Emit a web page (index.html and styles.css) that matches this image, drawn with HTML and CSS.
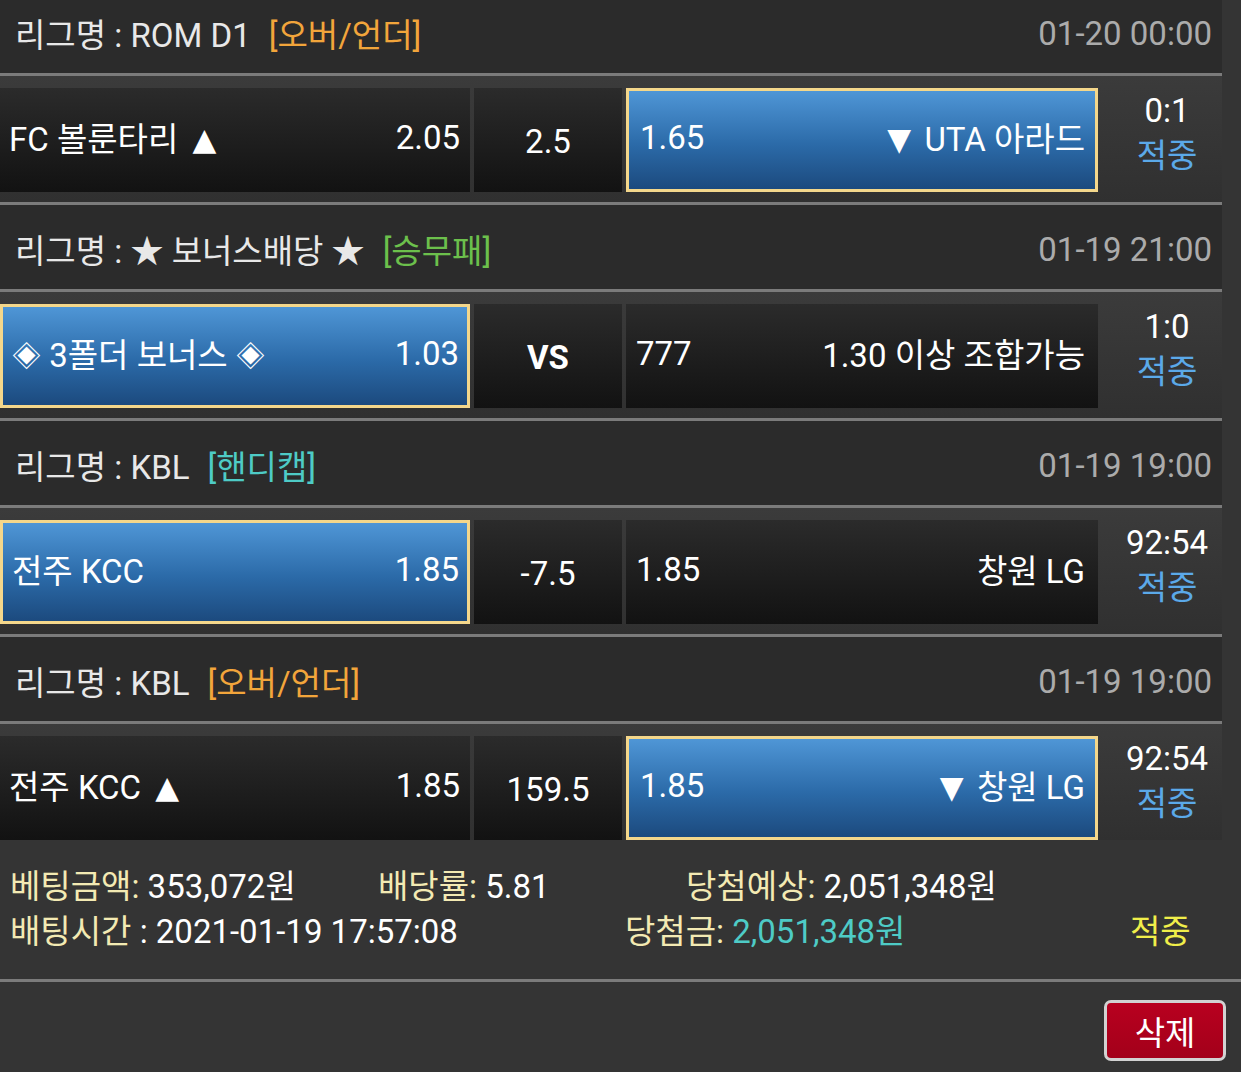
FILE: index.html
```html
<!DOCTYPE html>
<html lang="ko">
<head>
<meta charset="utf-8">
<title>베팅내역</title>
<link rel="stylesheet" href="styles.css">
</head>
<body>
<div class="page">
  <div class="list">
    <section class="game">
      <div class="league"><span class="lname">리그명 : ROM D1</span><span class="tag orange">[오버/언더]</span><span class="time">01-20 00:00</span></div>
      <div class="match">
        <div class="cell home"><span>FC 볼룬타리 <span class="tri up">▲</span></span><span>2.05</span></div>
        <div class="cell mid">2.5</div>
        <div class="cell away sel"><span>1.65</span><span><span class="tri down">▼</span> UTA 아라드</span></div>
        <div class="score"><span class="res">0:1</span><span class="hit">적중</span></div>
      </div>
    </section>
    <section class="game">
      <div class="league"><span class="lname">리그명 : ★ 보너스배당 ★</span><span class="tag green">[승무패]</span><span class="time">01-19 21:00</span></div>
      <div class="match">
        <div class="cell home sel"><span><span class="dia">◈</span> 3폴더 보너스 <span class="dia">◈</span></span><span>1.03</span></div>
        <div class="cell mid vs">VS</div>
        <div class="cell away"><span>777</span><span>1.30 이상 조합가능</span></div>
        <div class="score"><span class="res">1:0</span><span class="hit">적중</span></div>
      </div>
    </section>
    <section class="game">
      <div class="league"><span class="lname">리그명 : KBL</span><span class="tag teal">[핸디캡]</span><span class="time">01-19 19:00</span></div>
      <div class="match">
        <div class="cell home sel"><span>전주 KCC</span><span>1.85</span></div>
        <div class="cell mid">-7.5</div>
        <div class="cell away"><span>1.85</span><span>창원 LG</span></div>
        <div class="score"><span class="res">92:54</span><span class="hit">적중</span></div>
      </div>
    </section>
    <section class="game">
      <div class="league"><span class="lname">리그명 : KBL</span><span class="tag orange">[오버/언더]</span><span class="time">01-19 19:00</span></div>
      <div class="match">
        <div class="cell home"><span>전주 KCC <span class="tri up">▲</span></span><span>1.85</span></div>
        <div class="cell mid">159.5</div>
        <div class="cell away sel"><span>1.85</span><span><span class="tri down">▼</span> 창원 LG</span></div>
        <div class="score"><span class="res">92:54</span><span class="hit">적중</span></div>
      </div>
    </section>
  </div>
  <div class="summary">
    <div class="srow">
      <span class="c1"><span class="lbl">베팅금액:</span> 353,072원</span>
      <span class="c2"><span class="lbl">배당률:</span> 5.81</span>
      <span><span class="lbl">당첨예상:</span> 2,051,348원</span>
    </div>
    <div class="srow">
      <span class="c1b"><span class="lbl">배팅시간</span> : 2021-01-19 17:57:08</span>
      <span class="c2b"><span class="lbl">당첨금:</span> <span class="win">2,051,348원</span></span>
      <span class="result">적중</span>
    </div>
  </div>
  <div class="actions">
    <button class="del" type="button">삭제</button>
  </div>
</div>
</body>
</html>
```

FILE: styles.css
```css
* { box-sizing: border-box; }

html, body {
  margin: 0;
  padding: 0;
  background: #343434;
}

body {
  font-family: Roboto, "Noto Sans CJK KR", sans-serif;
  font-size: 33px;
  color: #ffffff;
  overflow: hidden;
}

.page {
  width: 1241px;
  height: 1072px;
  overflow: hidden;
}

.list {
  width: 1222px;
  margin-top: -11px;
}

.game:not(:last-child) {
  border-bottom: 3px solid #7b7b7b;
}

.league {
  height: 87px;
  display: flex;
  align-items: center;
  padding: 4px 10px 0 15px;
  background: #2b2b2b;
  border-bottom: 3px solid #7b7b7b;
  color: #e8e8e8;
}

.tag { margin-left: 18px; }
.orange { color: #f2a53b; }
.green { color: #6cc04c; }
.teal { color: #4ecbc6; }

.time {
  margin-left: auto;
  color: #ababab;
}

.match {
  display: flex;
  gap: 4px;
  padding: 12px 0 10px;
  background: linear-gradient(#3b3b3b, #303030);
}

.game:last-child .match { padding-bottom: 0; }

.cell {
  height: 104px;
  display: flex;
  align-items: center;
  justify-content: space-between;
  padding: 0 10px 6px 9px;
  background: linear-gradient(#2b2b2b, #121212);
  color: #fff;
}

.cell.sel {
  border: 3px solid #f4d78b;
  padding: 0 8px 6px 9px;
  background: linear-gradient(#4f96d6, #2b6aa8 55%, #1c4a7e);
}

.tri {
  font-family: "DejaVu Sans", sans-serif;
  font-size: 31px;
  vertical-align: 1px;
}
.tri.up { margin-left: 6px; }
.tri.down { margin-right: 5px; }

.dia {
  font-size: 29px;
  vertical-align: 1px;
}

.home { width: 470px; }
.mid {
  width: 148px;
  justify-content: center;
  padding: 2px 0 0;
}
.away { width: 472px; padding: 0 13px 6px 10px; }
.away.sel { padding: 0 10px 6px 11px; }

.vs { font-weight: 700; }

.score {
  flex: 1;
  height: 104px;
  display: flex;
  flex-direction: column;
  align-items: center;
  justify-content: center;
  padding: 0 0 14px 10px;
  line-height: 45px;
}

.res { color: #fff; }
.hit { color: #5ba9e9; }

.summary {
  height: 142px;
  padding: 24px 0 0 10px;
  border-bottom: 3px solid #7b7b7b;
  line-height: 45px;
}

.srow { display: flex; }

.lbl { color: #f3eab3; }
.c1 { width: 368px; }
.c2 { width: 308px; }
.c1b { width: 615px; }
.c2b { width: 505px; }
.win { color: #4ecbc6; }
.result { color: #f0ee4a; }

.actions {
  display: flex;
  justify-content: flex-end;
  padding: 18px 15px 0 0;
}

.del {
  width: 122px;
  height: 61px;
  border: 3px solid #d2d2d2;
  border-radius: 7px;
  background: linear-gradient(#b8001f, #a3001a);
  color: #fff;
  font-family: Roboto, "Noto Sans CJK KR", sans-serif;
  font-size: 33px;
  padding: 0;
}
```
